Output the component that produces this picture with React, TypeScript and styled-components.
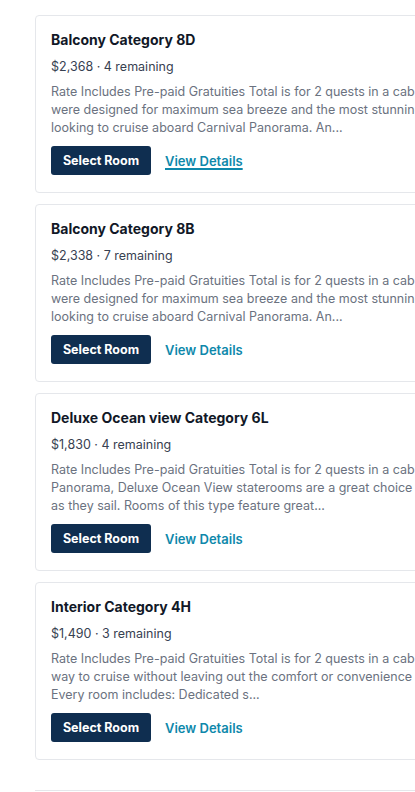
import React from "react";
import styled, { createGlobalStyle } from "styled-components";

const GlobalStyle = createGlobalStyle`
  html, body {
    margin: 0;
    padding: 0;
    background: #ffffff;
    overflow: hidden;
  }
  body {
    font-family: "Inter", "Noto Sans", "Liberation Sans", sans-serif;
    -webkit-font-smoothing: antialiased;
  }
`;

const Page = styled.div`
  width: 680px;
  padding: 15px 0 0 35px;
  display: flex;
  flex-direction: column;
  gap: 11px;
`;

const Card = styled.div`
  width: 640px;
  box-sizing: border-box;
  border: 1px solid #e5e7eb;
  border-radius: 4px;
  padding: 14px 15px 17px 15px;
  display: flex;
  flex-direction: column;
`;

const Title = styled.h3`
  margin: 0;
  font-size: 14px;
  line-height: 20px;
  font-weight: 700;
  color: #111827;
`;

const Meta = styled.div`
  margin-top: 7px;
  font-size: 12.5px;
  line-height: 20px;
  color: #374151;
`;

const Description = styled.p`
  margin: 6px 0 0 0;
  font-size: 12.5px;
  line-height: 18px;
  color: #6b7280;
  white-space: pre;
`;

const Actions = styled.div`
  margin-top: 9px;
  display: flex;
  align-items: center;
  gap: 14px;
`;

const SelectButton = styled.button`
  height: 29px;
  width: 100px;
  border: none;
  border-radius: 3px;
  background: #0f2e50;
  color: #ffffff;
  font-family: inherit;
  font-size: 12.5px;
  font-weight: 700;
  padding: 0;
  cursor: pointer;
`;

const DetailsLink = styled.a<{ $underline?: boolean }>`
  font-size: 13px;
  font-weight: 600;
  color: #0e88ab;
  text-decoration: ${(p) => (p.$underline ? "underline" : "none")};
  text-decoration-thickness: 1.5px;
  text-underline-offset: 2px;
  cursor: pointer;
`;

const Divider = styled.div`
  margin-top: 19px;
  width: 640px;
  border-top: 1px solid #e5e7eb;
`;

type Room = {
  title: string;
  price: string;
  remaining: number;
  lines: string[];
};

const rooms: Room[] = [
  {
    title: "Balcony Category 8D",
    price: "$2,368",
    remaining: 4,
    lines: [
      "Rate Includes Pre-paid Gratuities Total is for 2 quests in a cabin. Balcony staterooms",
      "were designed for maximum sea breeze and the most stunning views for guests",
      "looking to cruise aboard Carnival Panorama. An...",
    ],
  },
  {
    title: "Balcony Category 8B",
    price: "$2,338",
    remaining: 7,
    lines: [
      "Rate Includes Pre-paid Gratuities Total is for 2 quests in a cabin. Balcony staterooms",
      "were designed for maximum sea breeze and the most stunning views for guests",
      "looking to cruise aboard Carnival Panorama. An...",
    ],
  },
  {
    title: "Deluxe Ocean view Category 6L",
    price: "$1,830",
    remaining: 4,
    lines: [
      "Rate Includes Pre-paid Gratuities Total is for 2 quests in a cabin. On Carnival",
      "Panorama, Deluxe Ocean View staterooms are a great choice for guests who want to see the sea",
      "as they sail. Rooms of this type feature great...",
    ],
  },
  {
    title: "Interior Category 4H",
    price: "$1,490",
    remaining: 3,
    lines: [
      "Rate Includes Pre-paid Gratuities Total is for 2 quests in a cabin. Interior rooms are a great",
      "way to cruise without leaving out the comfort or convenience of a stateroom onboard.",
      "Every room includes: Dedicated s...",
    ],
  },
];

export default function App() {
  return (
    <>
      <GlobalStyle />
      <Page>
        {rooms.map((room, i) => (
          <Card key={room.title}>
            <Title>{room.title}</Title>
            <Meta>
              {room.price} · {room.remaining} remaining
            </Meta>
            <Description>{room.lines.join("\n")}</Description>
            <Actions>
              <SelectButton>Select Room</SelectButton>
              <DetailsLink $underline={i === 0}>View Details</DetailsLink>
            </Actions>
          </Card>
        ))}
        <Divider />
      </Page>
    </>
  );
}
